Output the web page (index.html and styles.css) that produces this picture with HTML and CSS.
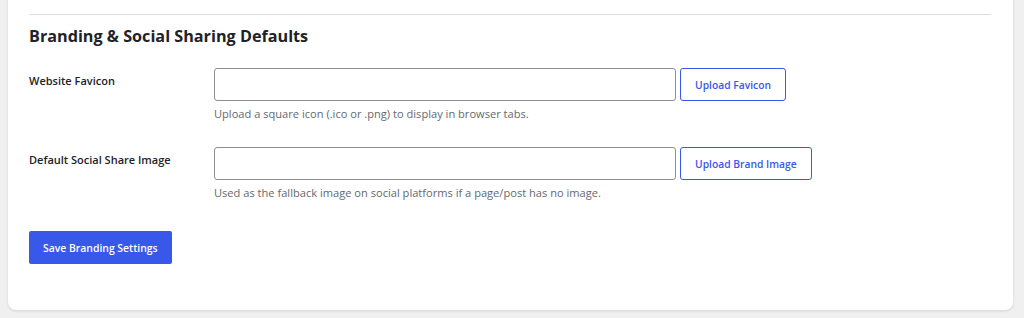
FILE: index.html
```html
<!DOCTYPE html>
<html lang="en">
<head>
    <meta charset="UTF-8">
    <meta name="viewport" content="width=device-width, initial-scale=1.0">
    <title>Branding Settings</title>
    <link rel="stylesheet" href="styles.css">
</head>
<body>
    <div class="card">
        <hr class="divider">
        <h2 class="section-title">Branding &amp; Social Sharing Defaults</h2>

        <form class="branding-form" onsubmit="return false;">
            <div class="field-row">
                <label class="field-label" for="faviconUrl">Website Favicon</label>
                <div class="field-body">
                    <div class="field-controls">
                        <input type="text" id="faviconUrl" class="url-input">
                        <button type="button" class="btn-secondary">Upload Favicon</button>
                    </div>
                    <p class="description">Upload a square icon (.ico or .png) to display in browser tabs.</p>
                </div>
            </div>

            <div class="field-row">
                <label class="field-label" for="shareImageUrl">Default Social Share Image</label>
                <div class="field-body">
                    <div class="field-controls">
                        <input type="text" id="shareImageUrl" class="url-input">
                        <button type="button" class="btn-secondary">Upload Brand Image</button>
                    </div>
                    <p class="description">Used as the fallback image on social platforms if a page/post has no image.</p>
                </div>
            </div>

            <button type="submit" class="btn-primary">Save Branding Settings</button>
        </form>
    </div>
</body>
</html>
```

FILE: styles.css
```css
body {
    margin: 0;
    padding-bottom: 7px;
    background-color: #f0f0f1;
    font-family: "Open Sans", "Noto Sans", Arial, sans-serif;
    font-size: 11px;
    color: #1d2327;
}

.card {
    margin: -20px 11px 0 8px;
    padding: 34px 22px 46px 21px;
    background: #ffffff;
    border-radius: 8px;
    box-shadow: 0 1px 3px rgba(0, 0, 0, 0.12);
}

.divider {
    margin: 0;
    border: none;
    border-top: 1px solid #dcdcde;
}

.section-title {
    margin: 9px 0 0;
    font-size: 16.2px;
    font-weight: 700;
    line-height: 24px;
}

.branding-form {
    margin-top: 20px;
}

.field-row {
    display: grid;
    grid-template-columns: 185px 1fr;
    margin-bottom: 24px;
}

.field-label {
    padding-top: 4px;
    font-weight: 600;
    line-height: 18px;
}

.field-controls {
    display: flex;
    gap: 4px;
}

.url-input {
    box-sizing: border-box;
    width: 462px;
    height: 33px;
    margin: 0;
    padding: 0 8px;
    border: 1px solid #8c8f94;
    border-radius: 3px;
    background: #ffffff;
    font-family: inherit;
    font-size: 12px;
}

.btn-secondary {
    box-sizing: border-box;
    height: 33px;
    padding: 0 14px;
    border: 1px solid #3858e9;
    border-radius: 3px;
    background: #ffffff;
    color: #3858e9;
    font-family: inherit;
    font-size: 10.3px;
    font-weight: 600;
    cursor: pointer;
}

.description {
    margin: 4px 0 0;
    color: #646970;
    font-size: 11.1px;
    line-height: 18px;
}

.btn-primary {
    display: block;
    box-sizing: border-box;
    height: 33px;
    margin-top: 29px;
    padding: 0 14px;
    border: none;
    border-radius: 2px;
    background-color: #3858e9;
    color: #ffffff;
    font-family: inherit;
    font-size: 10.4px;
    font-weight: 600;
    cursor: pointer;
}
```
